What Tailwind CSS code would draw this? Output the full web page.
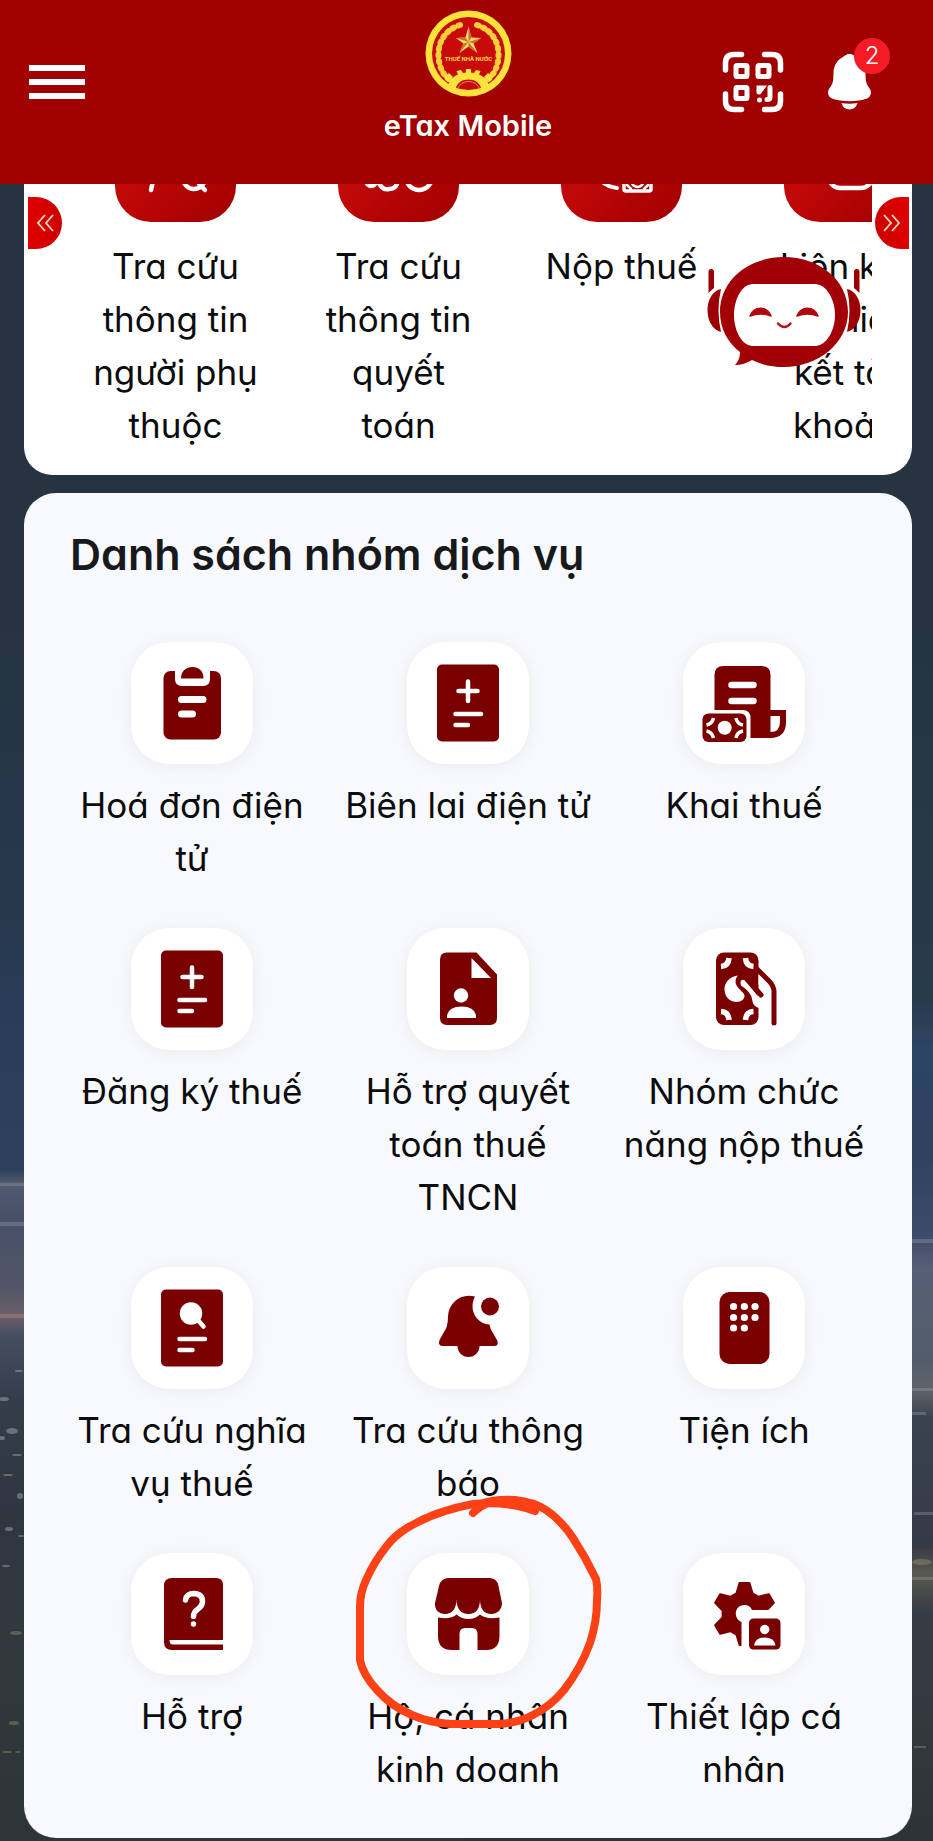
<!DOCTYPE html>
<html lang="vi">
<head>
  <meta charset="UTF-8">
  <meta name="viewport" content="width=device-width, initial-scale=1.0">
  <title>eTax Mobile</title>
  <script src="https://cdn.jsdelivr.net/npm/@tailwindcss/browser@4"></script>
</head>
<body class="bg-[#263340] font-['Inter','Noto_Sans',sans-serif] [font-feature-settings:'cv11'] text-[#0c0c0e]">
  <div class="relative isolate min-h-screen overflow-hidden pb-[3px]">

    <!-- Background: evening sky over the city -->
    <svg class="absolute inset-0 -z-10 w-full h-full" viewBox="0 0 933 1841" preserveAspectRatio="none" aria-hidden="true">
      <defs>
        <linearGradient id="skyLeft" gradientUnits="userSpaceOnUse" x1="0" y1="0" x2="0" y2="1841">
          <stop offset="0.3" stop-color="#263340"/>
          <stop offset="0.5" stop-color="#27384d"/>
          <stop offset="0.56" stop-color="#2a3e5c"/>
          <stop offset="0.635" stop-color="#2d405d"/>
          <stop offset="0.643" stop-color="#525c70"/>
          <stop offset="0.66" stop-color="#465067"/>
          <stop offset="0.7" stop-color="#535568"/>
          <stop offset="0.715" stop-color="#6d6069"/>
          <stop offset="0.725" stop-color="#454d60"/>
          <stop offset="0.76" stop-color="#353d4b"/>
          <stop offset="0.82" stop-color="#2f3641"/>
          <stop offset="0.9" stop-color="#31383d"/>
          <stop offset="1" stop-color="#2d3537"/>
        </linearGradient>
        <linearGradient id="skyRight" gradientUnits="userSpaceOnUse" x1="0" y1="0" x2="0" y2="1841">
          <stop offset="0.3" stop-color="#263340"/>
          <stop offset="0.54" stop-color="#273a4a"/>
          <stop offset="0.57" stop-color="#2e4464"/>
          <stop offset="0.62" stop-color="#2c425e"/>
          <stop offset="0.67" stop-color="#3d4a6a"/>
          <stop offset="0.69" stop-color="#566075"/>
          <stop offset="0.74" stop-color="#535c6b"/>
          <stop offset="0.755" stop-color="#5f646b"/>
          <stop offset="0.77" stop-color="#3a4250"/>
          <stop offset="0.84" stop-color="#353a46"/>
          <stop offset="0.855" stop-color="#5a594f"/>
          <stop offset="0.875" stop-color="#363d45"/>
          <stop offset="1" stop-color="#2d3438"/>
        </linearGradient>
      </defs>
      <rect width="467" height="1841" fill="url(#skyLeft)"/>
      <rect x="466" width="467" height="1841" fill="url(#skyRight)"/>
      <g fill="#9aa0ab" opacity="0.35">
        <rect y="1183" width="24" height="3"/><rect y="1222" width="24" height="4"/>
        <rect x="912" y="1239" width="21" height="4"/><rect x="912" y="1388" width="21" height="3"/>
        <rect x="912" y="1412" width="14" height="3"/><rect x="914" y="1512" width="19" height="3"/>
        <rect x="912" y="1577" width="21" height="3"/><rect x="914" y="1746" width="12" height="2"/>
      </g>
      <rect y="1314" width="24" height="4" fill="#a98078" opacity="0.5"/>
      <g fill="#c3bfc4" opacity="0.4">
        <ellipse cx="4" cy="1399" rx="5" ry="2"/><ellipse cx="19" cy="1371" rx="4" ry="1"/>
        <ellipse cx="12" cy="1431" rx="6" ry="3"/><ellipse cx="2" cy="1438" rx="3" ry="2"/>
        <ellipse cx="17" cy="1455" rx="5" ry="1"/><ellipse cx="8" cy="1475" rx="5" ry="1"/>
        <ellipse cx="20" cy="1496" rx="3" ry="3"/><ellipse cx="9" cy="1529" rx="4" ry="2"/>
        <ellipse cx="21" cy="1536" rx="3" ry="1"/><ellipse cx="6" cy="1566" rx="4" ry="1"/>
      </g>
      <g fill="#a39a70" opacity="0.4">
        <ellipse cx="16" cy="1633" rx="6" ry="2"/><ellipse cx="14" cy="1723" rx="5" ry="2"/>
        <ellipse cx="7" cy="1752" rx="5" ry="1"/><ellipse cx="18" cy="1752" rx="3" ry="1"/>
        <ellipse cx="922" cy="1562" rx="10" ry="3"/>
      </g>
    </svg>

    <!-- Header -->
    <header class="relative z-10 h-[184px] bg-[#a00000] text-white pl-[29px] pr-[26px] grid grid-cols-[1fr_auto_1fr]">
      <div class="h-[163px] flex items-center">
        <button type="button" aria-label="Menu" class="flex flex-col gap-2">
          <span class="block w-14 h-[6px] bg-white"></span>
          <span class="block w-14 h-[6px] bg-white"></span>
          <span class="block w-14 h-[6px] bg-white"></span>
        </button>
      </div>

      <div class="flex flex-col items-center pt-[10px]">
        <svg class="w-[87px] h-[87px]" viewBox="0 0 87 87" aria-hidden="true">
          <circle cx="43.5" cy="43.5" r="43" fill="#fde23c"/>
          <circle cx="43.5" cy="43.5" r="36.5" fill="#c90a0a"/>
          <!-- rice ears -->
          <g fill="none" stroke="#f3cf3a" stroke-linecap="round">
            <path d="M35 15C20 20 13 32 13.500 46C14 57 18 65 26 71" stroke-width="6" stroke-dasharray="1.500 5"/>
            <path d="M52 15C67 20 74 32 73.500 46C73 57 69 65 61 71" stroke-width="6" stroke-dasharray="1.500 5"/>
            <path d="M35 15C20 20 13 32 13.500 46C14 57 18 65 26 71M52 15C67 20 74 32 73.500 46C73 57 69 65 61 71" stroke-width="1.500"/>
          </g>
          <path d="M43.500 16.500L46.500 27.500L56 28L48.500 33.500L52.500 43L43.500 36.500L34.500 43L38.500 33.500L31 28L40.500 27.500Z" fill="#fbdc7a"/>
          <path d="M43.500 16.500V32L46.500 27.500ZM56 28L43.500 32L48.500 33.500ZM52.500 43L43.500 32V36.500ZM34.500 43L43.500 32L38.500 33.500ZM31 28L43.500 32L40.500 27.500Z" fill="#c8741e"/>
          <!-- cog -->
          <path d="M22 79C23 72 27 67 33 64.500L31.500 61L36 60L38 63L41 62.500V59H46V62.500L49 63L51 60L55.500 61L54 64.500C60 67 64 72 65 79L57.500 82C56 74 51 69.500 43.500 69.500C36 69.500 31 74 29.500 82Z" fill="#fde23c"/>
          <path d="M23 72L19 67L24 63L28 67ZM64 72L68 67L63 63L59 67Z" fill="#fde23c"/>
          <path d="M32 80A12 12 0 0 1 55 80" fill="none" stroke="#f08a6a" stroke-width="1"/>
          <text x="43.500" y="51" text-anchor="middle" font-family="Roboto, sans-serif" font-weight="700" font-size="6" fill="#fbd94a">THUẾ NHÀ NƯỚC</text>
        </svg>
        <span class="mt-[11px] text-[29px] leading-[36px] font-semibold">eTax Mobile</span>
      </div>

      <div class="h-[163px] flex items-center justify-end gap-[44px] pr-[36px]">
        <button type="button" aria-label="Quét mã QR">
          <svg class="w-[62px] h-[62px]" viewBox="0 0 62 62" fill="none" stroke="#fff" stroke-width="5.500" stroke-linecap="round" aria-hidden="true">
            <path d="M3.500 19V12Q3.500 3.500 12 3.500H19.500M42.500 3.500H50Q58.500 3.500 58.500 12V19M58.500 43V50Q58.500 58.500 50 58.500H42.500M19.500 58.500H12Q3.500 58.500 3.500 50V43"/>
            <g stroke-width="5">
              <rect x="14" y="14.500" width="11" height="11" rx="1"/>
              <rect x="36" y="14.500" width="11" height="11" rx="1"/>
              <rect x="14" y="36.500" width="11" height="11" rx="1"/>
              <path d="M48 36.500V46.500Q48 48.500 45 48.500"/>
              <path d="M37 41V37H40L37 41M37.500 49V49.100"/>
            </g>
          </svg>
        </button>
        <button type="button" aria-label="Thông báo" class="relative">
          <svg class="w-[43px] h-[56px]" viewBox="0 0 43 56" fill="#fff" aria-hidden="true">
            <path d="M21.500 0C18 0 17 2 15 3C9 6 5.500 12 5.500 19C5.500 29 4 31 1 35C-1 38 0 43 4 44.500C14 48 29 48 39 44.500C43 43 44 38 42 35C39 31 37.500 29 37.500 19C37.500 12 34 6 28 3C26 2 25 0 21.500 0Z"/>
            <path d="M13.500 49Q21.500 50.500 29.500 49Q27.500 55.500 21.500 55.500Q15.500 55.500 13.500 49Z"/>
          </svg>
          <span class="absolute -top-4 left-[26px] w-9 h-9 rounded-full bg-[#f41c24] text-2xl leading-9 font-light text-center">2</span>
        </button>
      </div>
    </header>

    <main class="pl-[24px] pr-[21px] -mt-[83px] space-y-[18px]">

      <!-- Favourite features, scrolled partly under the header -->
      <section class="relative bg-white rounded-[28px] px-10 pb-[23px]">
        <ul class="flex overflow-hidden text-[35px] leading-[53px] text-center">
          <li class="shrink-0 w-[223px]">
            <a href="#" class="flex flex-col items-center gap-[18px]">
              <svg class="w-[121px] h-[121px] rounded-[36px] bg-linear-to-br from-[#d81010] to-[#a00000]" viewBox="0 0 121 121" fill="none" stroke="#fff" stroke-width="4.500" stroke-linecap="round" aria-hidden="true">
                <path d="M38 80L36 89"/><circle cx="79" cy="77" r="11"/><path d="M84 83L90 89"/>
              </svg>
              <span class="px-[26px]">Tra cứu thông tin người phụ thuộc</span>
            </a>
          </li>
          <li class="shrink-0 w-[223px]">
            <a href="#" class="flex flex-col items-center gap-[18px]">
              <svg class="w-[121px] h-[121px] rounded-[36px] bg-linear-to-br from-[#d81010] to-[#a00000]" viewBox="0 0 121 121" fill="none" stroke="#fff" stroke-width="4.500" stroke-linecap="round" aria-hidden="true">
                <path d="M28 81Q31 87 36 84L40 80Q44 90 51 88Q57 88 59 83"/><circle cx="81" cy="76" r="13"/>
              </svg>
              <span class="px-[26px]">Tra cứu thông tin quyết toán</span>
            </a>
          </li>
          <li class="shrink-0 w-[223px]">
            <a href="#" class="flex flex-col items-center gap-[18px]">
              <svg class="w-[121px] h-[121px] rounded-[36px] bg-linear-to-br from-[#d81010] to-[#a00000]" viewBox="0 0 121 121" fill="none" stroke="#fff" stroke-width="4" stroke-linecap="round" aria-hidden="true">
                <path d="M40 80Q47 86 56 87"/><rect x="63" y="66" width="27" height="24" rx="2" stroke-width="3.500"/><circle cx="76.500" cy="80" r="6" stroke-width="2.500"/><path d="M66 84L70 88M87 84L83 88" stroke-width="2.500"/>
              </svg>
              <span class="px-[26px]">Nộp thuế</span>
            </a>
          </li>
          <li class="shrink-0 w-[223px]">
            <a href="#" class="flex flex-col items-center gap-[18px]">
              <svg class="w-[121px] h-[121px] rounded-[36px] bg-linear-to-br from-[#d81010] to-[#a00000]" viewBox="0 0 121 121" fill="none" stroke="#fff" stroke-width="4.500" stroke-linecap="round" aria-hidden="true">
                <rect x="45" y="52" width="43" height="35" rx="11"/>
              </svg>
              <span class="px-[26px]">Liên kết huỷ liên kết tài khoản</span>
            </a>
          </li>
        </ul>
        <button type="button" aria-label="Trước" class="absolute left-1 top-[96px] w-[34px] h-[52px] rounded-r-full bg-linear-to-r from-[#e00000] to-[#cc0000] grid place-items-center">
          <svg class="w-[18px] h-[18px]" viewBox="0 0 18 18" fill="none" stroke="#ffd9c8" stroke-width="1.800" aria-hidden="true"><path d="M9 1L2 9L9 17M17 1L10 9L17 17"/></svg>
        </button>
        <button type="button" aria-label="Sau" class="absolute right-[3px] top-[96px] w-[34px] h-[52px] rounded-l-full bg-linear-to-r from-[#cc0000] to-[#e00000] grid place-items-center">
          <svg class="w-[18px] h-[18px]" viewBox="0 0 18 18" fill="none" stroke="#ffd9c8" stroke-width="1.800" aria-hidden="true"><path d="M1 1L8 9L1 17M9 1L16 9L9 17"/></svg>
        </button>

        <!-- Chat bot -->
        <button type="button" aria-label="Trợ lý ảo" class="absolute right-[50px] top-[154px]">
          <svg class="w-[156px] h-[112px]" viewBox="0 0 156 112" aria-hidden="true">
            <g fill="#9c0004">
              <path d="M2.500 17Q2.500 14 5.200 14Q8 14 8 17V33L2.500 38ZM148 17Q148 14 150.800 14Q153.500 14 153.500 17V38L148 33Z"/>
              <path d="M15 34C-3 38 -3 72 15 77Q10 55 15 34ZM141 34C159 38 159 72 141 77Q146 55 141 34Z"/>
            </g>
            <path d="M78 2C44 2 14 24 14 57C14 74 22 88 34 97Q34 105 29 110Q38 110 46 105C56 110 67 112 78 112C112 112 142 88 142 57C142 24 112 2 78 2Z" fill="#a00006"/>
            <path d="M47 29H109C120 29 129 44 129 60C129 76 120 91 109 91H47C36 91 28 76 28 60C28 44 36 29 47 29Z" fill="#fff"/>
            <path d="M44 61A11 11 0 0 1 65 61Q54.500 57 44 61ZM91 61A11 11 0 0 1 112 61Q101.500 57 91 61Z" fill="#b00a10" stroke="#b00a10" stroke-width="1.500" stroke-linejoin="round"/>
            <path d="M72 68.500Q78.500 75.500 84.500 68.500" fill="none" stroke="#b4141c" stroke-width="2.500" stroke-linecap="round"/>
          </svg>
        </button>
      </section>

      <!-- Service groups -->
      <section class="bg-[#f8f9fd] rounded-[32px] px-[30px] pt-[33px] pb-[42px]">
        <h1 class="px-4 text-[43px] leading-[56px] font-semibold text-[#17191c]">Danh sách nhóm dịch vụ</h1>

        <ul class="mt-[60px] grid grid-cols-3 gap-y-[43px] text-[35px] leading-[53px] text-center">
          <li>
            <a href="#" class="flex flex-col items-center gap-[15px]">
              <svg class="w-[122px] h-[122px] rounded-[38px] bg-white shadow-[0_2px_16px_rgba(0,0,0,0.06)]" viewBox="-1 0 122 122" fill="#7a0000" aria-hidden="true">
                <rect x="31.500" y="29" width="57.500" height="68.500" rx="7"/>
                <path d="M43 27H78V37Q78 44 71 44H50Q43 44 43 37Z" fill="#fff"/>
                <path d="M49 36.500C49 29 54 25 60.500 25C67 25 71.500 29 71.500 36.500Z"/>
                <path d="M49.500 57.500H71M49.500 72H60.500" stroke="#fff" stroke-width="7" stroke-linecap="round"/>
              </svg>
              <span class="px-2">Hoá đơn điện tử</span>
            </a>
          </li>
          <li>
            <a href="#" class="flex flex-col items-center gap-[15px]">
              <svg class="w-[122px] h-[122px] rounded-[38px] bg-white shadow-[0_2px_16px_rgba(0,0,0,0.06)]" viewBox="0 0 122 122" fill="#7a0000" aria-hidden="true">
                <rect x="30" y="22.500" width="62" height="77" rx="5"/>
                <path d="M61 39.500V59M51.500 49H70.500M48.500 72H74M48.500 83H61" stroke="#fff" stroke-width="4.500" stroke-linecap="round"/>
              </svg>
              <span class="px-2">Biên lai điện tử</span>
            </a>
          </li>
          <li>
            <a href="#" class="flex flex-col items-center gap-[15px]">
              <svg class="w-[122px] h-[122px] rounded-[38px] bg-white shadow-[0_2px_16px_rgba(0,0,0,0.06)]" viewBox="0 0 122 122" fill="#7a0000" aria-hidden="true">
                <path d="M31.500 68V33Q31.500 24 40.500 24H78.500Q87.500 24 87.500 33V68H103V80Q103 96 87 96H67.500V76Q67.500 68 59.500 68Z"/>
                <path d="M87.500 74H97V80Q97 90 87.500 90Z" fill="#fff"/>
                <path d="M48.500 43H70.500M48.500 59H70.500" stroke="#fff" stroke-width="6.500" stroke-linecap="round"/>
                <rect x="19.500" y="71.500" width="44" height="28.500" rx="6"/>
                <circle cx="41.700" cy="85.700" r="7" fill="#fff"/>
                <path d="M23.500 83Q29 82 30.500 76M60 83Q54 82 53 76M23.500 89Q29 90 30.500 96M60 89Q54 90 53 96" fill="none" stroke="#fff" stroke-width="3.500"/>
              </svg>
              <span class="px-2">Khai thuế</span>
            </a>
          </li>

          <li>
            <a href="#" class="flex flex-col items-center gap-[15px]">
              <svg class="w-[122px] h-[122px] rounded-[38px] bg-white shadow-[0_2px_16px_rgba(0,0,0,0.06)]" viewBox="0 0 122 122" fill="#7a0000" aria-hidden="true">
                <rect x="30" y="22.500" width="62" height="77" rx="5"/>
                <path d="M61 39.500V59M51.500 49H70.500M48.500 72H74M48.500 83H61" stroke="#fff" stroke-width="4.500" stroke-linecap="round"/>
              </svg>
              <span class="px-2">Đăng ký thuế</span>
            </a>
          </li>
          <li>
            <a href="#" class="flex flex-col items-center gap-[15px]">
              <svg class="w-[122px] h-[122px] rounded-[38px] bg-white shadow-[0_2px_16px_rgba(0,0,0,0.06)]" viewBox="0 0 122 122" fill="#7a0000" aria-hidden="true">
                <path d="M40 24.500H69.500L90 46.500V90Q90 97 83 97H40Q33 97 33 90V31.500Q33 24.500 40 24.500Z"/>
                <path d="M64.500 30V50H84Z" fill="#fff"/>
                <circle cx="54" cy="67.500" r="7.200" fill="#fff"/>
                <path d="M40 90V87Q42 78.500 54.500 78.500Q67 78.500 69 87V90Z" fill="#fff"/>
              </svg>
              <span class="px-5">Hỗ trợ quyết toán thuế TNCN</span>
            </a>
          </li>
          <li>
            <a href="#" class="flex flex-col items-center gap-[15px]">
              <svg class="w-[122px] h-[122px] rounded-[38px] bg-white shadow-[0_2px_16px_rgba(0,0,0,0.06)]" viewBox="0 0 122 122" fill="#7a0000" aria-hidden="true">
                <rect x="33" y="24.500" width="42.500" height="72.500" rx="8"/>
                <path d="M38 38.500Q45.500 38 46 30M70.500 38.500Q63 38 62.500 30M38 83.500Q45.500 84 46 92M70.500 83.500Q63 84 62.500 92" fill="none" stroke="#fff" stroke-width="5.500"/>
                <path d="M55 47.500C45 49 41.500 56 41.500 61C41.500 69 47 74 53.500 74C59 74 63 70 61 66C58 62 53 59 52.500 54C52.500 51 53.500 49 55 47.500Z" fill="#fff"/>
                <path d="M58 52.500Q61 50.500 63.500 54L74 67Q79 71 81.500 65L75.500 56V47L83 54Q87 58 87 64V98H76V80Q70 79 69 71Q68 64 58 57.500Q57 54 58 52.500Z" fill="#fff"/>
                <path d="M74 41L86 53Q91 58 91 64V95M63 50L78 67" fill="none" stroke="#7a0000" stroke-width="5" stroke-linecap="round" stroke-linejoin="round"/>
              </svg>
              <span>Nhóm chức năng nộp thuế</span>
            </a>
          </li>

          <li>
            <a href="#" class="flex flex-col items-center gap-[15px]">
              <svg class="w-[122px] h-[122px] rounded-[38px] bg-white shadow-[0_2px_16px_rgba(0,0,0,0.06)]" viewBox="0 0 122 122" fill="#7a0000" aria-hidden="true">
                <rect x="30" y="22.500" width="62" height="77" rx="5"/>
                <circle cx="60" cy="46.500" r="11.200" fill="#fff"/>
                <path d="M66 52L72.500 59.500M48.500 72H74M48.500 83H61.500" stroke="#fff" stroke-width="4.500" stroke-linecap="round"/>
              </svg>
              <span class="px-2">Tra cứu nghĩa vụ thuế</span>
            </a>
          </li>
          <li>
            <a href="#" class="flex flex-col items-center gap-[15px]">
              <svg class="w-[122px] h-[122px] rounded-[38px] bg-white shadow-[0_2px_16px_rgba(0,0,0,0.06)]" viewBox="0 0 122 122" fill="#7a0000" aria-hidden="true">
                <path d="M68 29.500C53 26 42 36 41 49Q41 60 37 65L32.500 73Q30.500 79 36 79H50.500C50.500 85 55 90 61.500 90C68 90 72.500 85 72.500 79H87Q92 79 90.500 74L86 66Q83 62 82.500 57.500C70 57 61 43 68 29.500Z"/>
                <circle cx="83" cy="39.500" r="9"/>
              </svg>
              <span class="px-2">Tra cứu thông báo</span>
            </a>
          </li>
          <li>
            <a href="#" class="flex flex-col items-center gap-[15px]">
              <svg class="w-[122px] h-[122px] rounded-[38px] bg-white shadow-[0_2px_16px_rgba(0,0,0,0.06)]" viewBox="0 0 122 122" fill="#7a0000" aria-hidden="true">
                <rect x="36.500" y="25" width="50" height="72" rx="10"/>
                <path d="M50.500 39.500H50.600M61.300 39.500H61.400M72 39.500H72.100M50.500 50.500H50.600M61.300 50.500H61.400M72 50.500H72.100M50.500 61H50.600M61.300 61H61.400" stroke="#fff" stroke-width="7.200" stroke-linecap="round"/>
              </svg>
              <span class="px-2">Tiện ích</span>
            </a>
          </li>

          <li>
            <a href="#" class="flex flex-col items-center gap-[15px]">
              <svg class="w-[122px] h-[122px] rounded-[38px] bg-white shadow-[0_2px_16px_rgba(0,0,0,0.06)]" viewBox="0 0 122 122" fill="#7a0000" aria-hidden="true">
                <path d="M41 25H85Q92 25 92 32V97H41Q33 97 33 89V33Q33 25 41 25Z"/>
                <path d="M38.500 87H93V91.500H42Q38.500 91.500 38.500 87Z" fill="#fff"/>
                <path d="M54.500 47Q55.500 40.500 63 40.500Q71.500 41 71.500 48.500Q71.500 53 67 56Q62.500 59 62.500 63.500M62.500 71V71.100" fill="none" stroke="#fff" stroke-width="5.500" stroke-linecap="round"/>
              </svg>
              <span class="px-2">Hỗ trợ</span>
            </a>
          </li>
          <li class="relative">
            <a href="#" class="flex flex-col items-center gap-[15px]">
              <svg class="w-[122px] h-[122px] rounded-[38px] bg-white shadow-[0_2px_16px_rgba(0,0,0,0.06)]" viewBox="0 0 122 122" fill="#7a0000" aria-hidden="true">
                <path d="M42 25H82Q90 25 91.500 33L95 50C95 57 90 61 84.500 61C77 61 73 56 73 46C73 56 69 61 61.500 61C54 61 49.500 56 49.500 46C49.500 56 45 61 38 61C32 61 27.500 57 28 50L32 33Q34 25 42 25Z"/>
                <path d="M31 64.500Q43 67 49.500 61.500Q55 66 61.500 66Q68 66 73 61.500Q80 67 92.500 64.500V83Q92.500 97 79 97H70.500V81Q70.500 75 65 75H58Q52.500 75 52.500 81V97H45Q31 97 31 83Z"/>
              </svg>
              <span class="px-5">Hộ, cá nhân kinh doanh</span>
            </a>
            <!-- Hand-drawn marker -->
            <svg class="absolute left-1/2 -ml-[116px] -top-[59px] w-[253px] h-[236px] overflow-visible pointer-events-none" viewBox="352 1494 253 236" fill="none" stroke="#fc4116" stroke-width="8" stroke-linecap="round" stroke-linejoin="round" aria-hidden="true">
              <path d="M473 1513Q481 1505 489 1503M535 1511Q510 1501 473 1504Q435 1511 407 1528Q394 1536 386 1547Q374 1562 366 1580Q360 1593 360 1607V1660Q363 1675 377 1690Q391 1706 412 1715Q430 1723 451 1724H499Q518 1723 533 1715Q551 1706 564 1690Q581 1668 590 1643Q597 1622 597 1600Q598 1588 596 1579Q586 1558 573 1538Q561 1520 546 1510Q534 1502 515 1500Q495 1499 480 1504"/>
            </svg>
          </li>
          <li>
            <a href="#" class="flex flex-col items-center gap-[15px]">
              <svg class="w-[122px] h-[122px] rounded-[38px] bg-white shadow-[0_2px_16px_rgba(0,0,0,0.06)]" viewBox="0 0 122 122" fill="#7a0000" aria-hidden="true">
                <circle cx="61.500" cy="61" r="23"/>
                <g stroke="#7a0000" stroke-width="2" stroke-linejoin="round">
                  <path d="M53 42L56.500 30H66.500L70 42Z"/>
                  <path d="M53 42L56.500 30H66.500L70 42Z" transform="rotate(60 61.500 61)"/>
                  <path d="M53 42L56.500 30H66.500L70 42Z" transform="rotate(180 61.500 61)"/>
                  <path d="M53 42L56.500 30H66.500L70 42Z" transform="rotate(240 61.500 61)"/>
                  <path d="M53 42L56.500 30H66.500L70 42Z" transform="rotate(300 61.500 61)"/>
                </g>
                <path d="M58.500 98V69C50 66 51 52 61.500 52Q67 52 69 57H98V98Z" fill="#fff"/>
                <rect x="66" y="65.500" width="31.500" height="31" rx="4.500"/>
                <circle cx="81.700" cy="76.500" r="4.700" fill="#fff"/>
                <path d="M71 92.500Q72 84.500 81.700 84.500Q91.500 84.500 92.500 92.500Z" fill="#fff"/>
              </svg>
              <span class="px-5">Thiết lập cá nhân</span>
            </a>
          </li>
        </ul>
      </section>
    </main>
  </div>
</body>
</html>
